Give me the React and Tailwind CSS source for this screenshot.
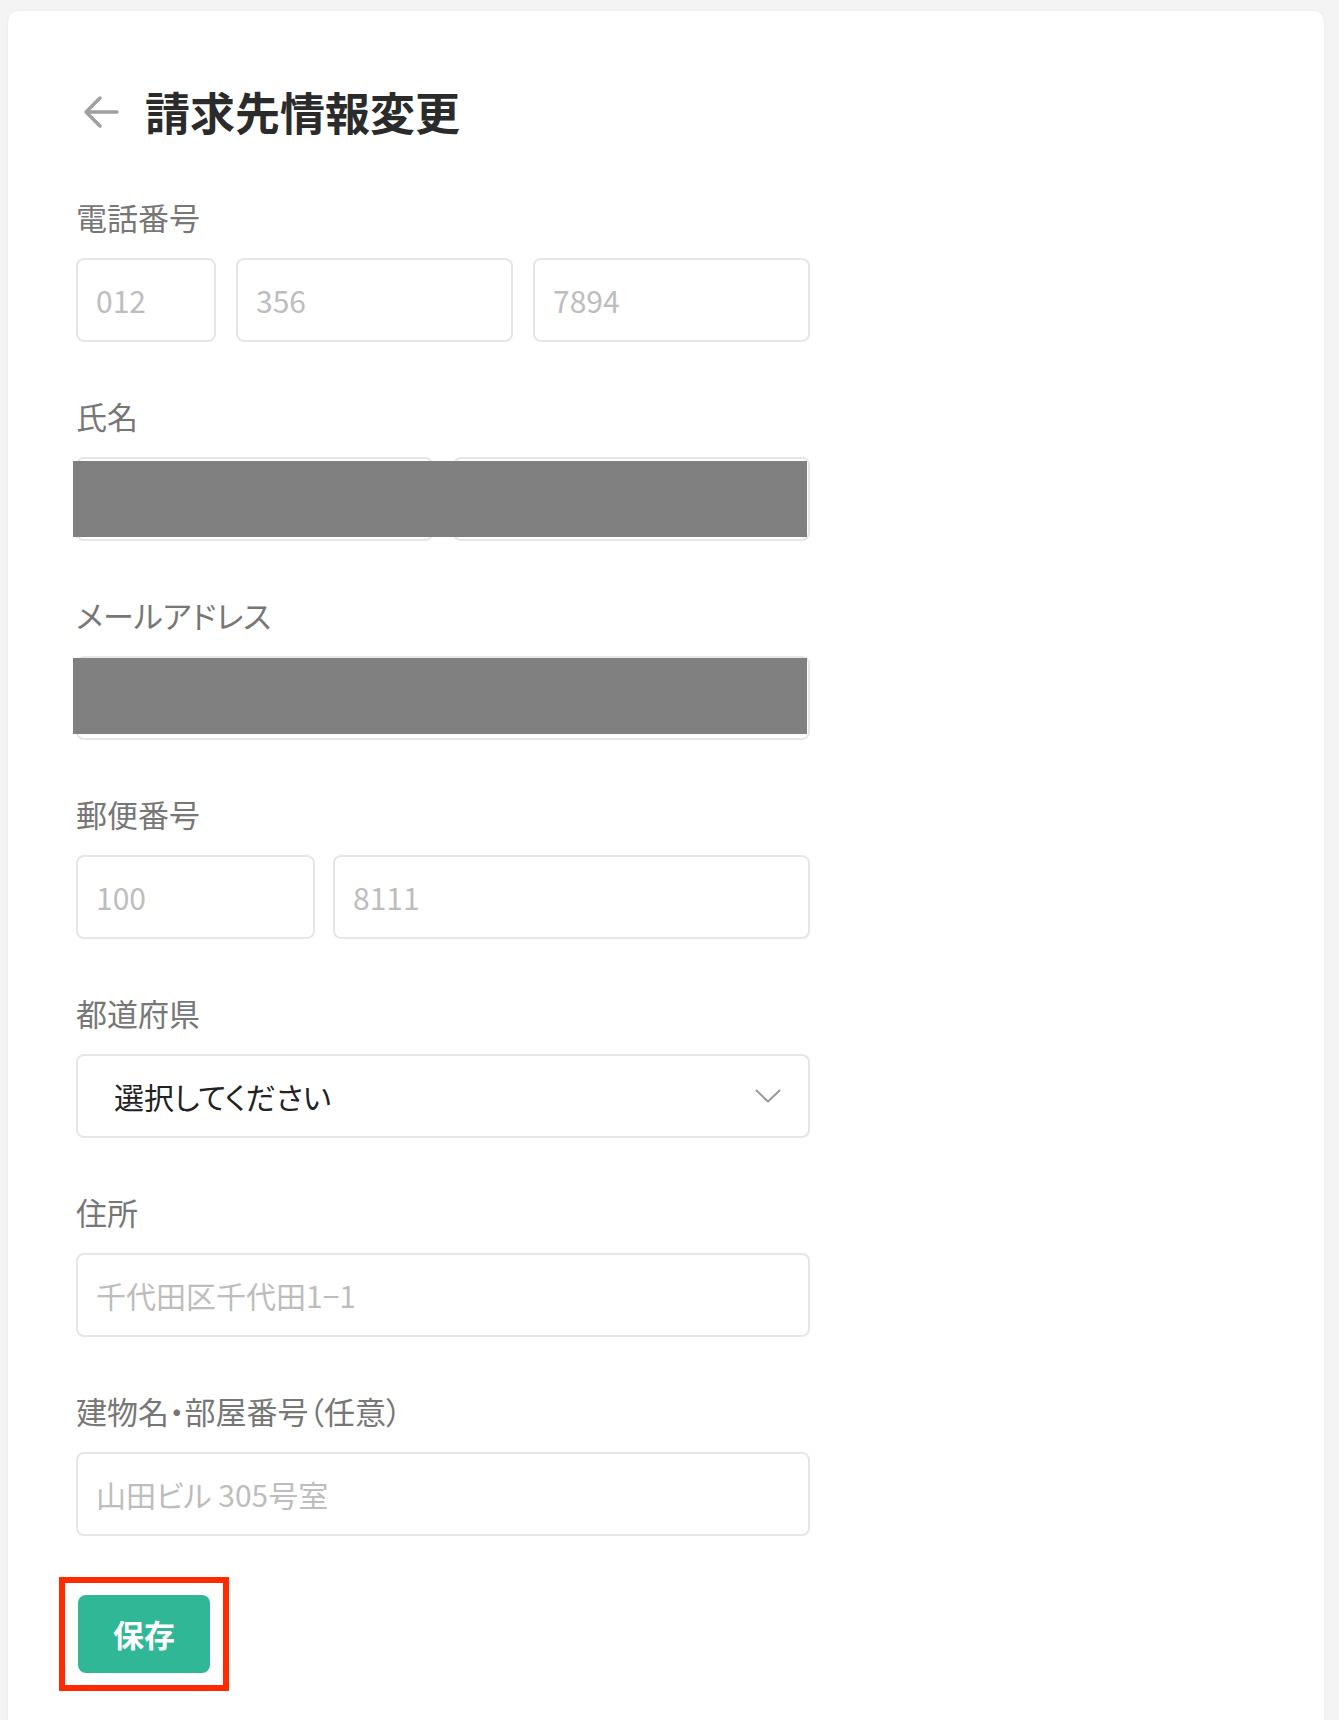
import React from "react";

function Field({ label, children, redact }) {
  return (
    <div className="mb-[54px]">
      <div className="text-[31px] leading-[40px] text-[#777777] mb-[21px]">{label}</div>
      <div className="relative">
        {children}
        {redact && <div className={redact} />}
      </div>
    </div>
  );
}

function TextBox({ placeholder, className = "" }) {
  return (
    <input
      type="text"
      placeholder={placeholder}
      className={`h-[84px] border-2 border-[#e6e6e6] rounded-[8px] pl-[18px] text-[30px] text-[#333] placeholder:text-[#bdbdbd] outline-none bg-white ${className}`}
    />
  );
}

export default function App() {
  return (
    <div className="min-h-screen bg-[#f4f4f4] pt-[11px] pl-[8px] pr-[15px] font-['Noto_Sans_CJK_JP','Noto_Sans',sans-serif] [font-feature-settings:'palt']">
      <div className="bg-white rounded-t-[10px] min-h-[1709px] pt-[71px] px-[68px] shadow-[0_0_2px_rgba(0,0,0,0.08)]">
        {/* header */}
        <div className="flex items-center h-[60px] mb-[55px]">
          <svg width="38" height="36" viewBox="0 0 38 36" className="ml-[6px] mr-[25px]" fill="none">
            <path d="M35 18H4M18 4L4 18l14 14" stroke="#a0a0a0" strokeWidth="3.5" strokeLinecap="round" strokeLinejoin="round" />
          </svg>
          <h1 className="text-[45px] font-bold text-[#2b2b2b] leading-[60px]">請求先情報変更</h1>
        </div>

        <div className="w-[734px]">
          <Field label="電話番号">
            <div className="flex gap-[20px]">
              <TextBox placeholder="012" className="w-[140px]" />
              <TextBox placeholder="356" className="w-[277px]" />
              <TextBox placeholder="7894" className="w-[277px]" />
            </div>
          </Field>

          <Field label="氏名" redact="absolute left-[-3px] right-[3px] top-[4px] bottom-[4px] bg-[#808080]">
            <div className="flex gap-[20px]">
              <TextBox placeholder="" className="w-[357px]" />
              <TextBox placeholder="" className="w-[357px]" />
            </div>
          </Field>

          <Field label="メールアドレス" redact="absolute left-[-3px] right-[3px] top-[2px] bottom-[6px] bg-[#808080]">
            <TextBox placeholder="" className="w-full" />
          </Field>

          <Field label="郵便番号">
            <div className="flex gap-[18px]">
              <TextBox placeholder="100" className="w-[239px]" />
              <TextBox placeholder="8111" className="w-[477px]" />
            </div>
          </Field>

          <Field label="都道府県">
            <div className="h-[84px] border-2 border-[#e6e6e6] rounded-[8px] pl-[36px] pr-[27px] flex items-center justify-between">
              <span className="text-[30px] text-[#222]">選択してください</span>
              <svg width="26" height="14" viewBox="0 0 26 14" fill="none">
                <path d="M1.5 1.5L13 12.5 24.5 1.5" stroke="#9a9a9a" strokeWidth="2" strokeLinecap="round" strokeLinejoin="round" />
              </svg>
            </div>
          </Field>

          <Field label="住所">
            <TextBox placeholder="千代田区千代田1−1" className="w-full" />
          </Field>

          <div>
            <div className="text-[31px] leading-[40px] text-[#777777] mb-[21px]">建物名・部屋番号（任意）</div>
            <TextBox placeholder="山田ビル 305号室" className="w-full" />
          </div>

          <div className="mt-[41px] ml-[-17px] inline-block border-[6px] border-[#ff2a00] px-[13px] py-[12px]">
            <button className="w-[132px] h-[78px] rounded-[8px] bg-[#30b795] text-white text-[31px] font-bold">
              保存
            </button>
          </div>
        </div>
      </div>
    </div>
  );
}
